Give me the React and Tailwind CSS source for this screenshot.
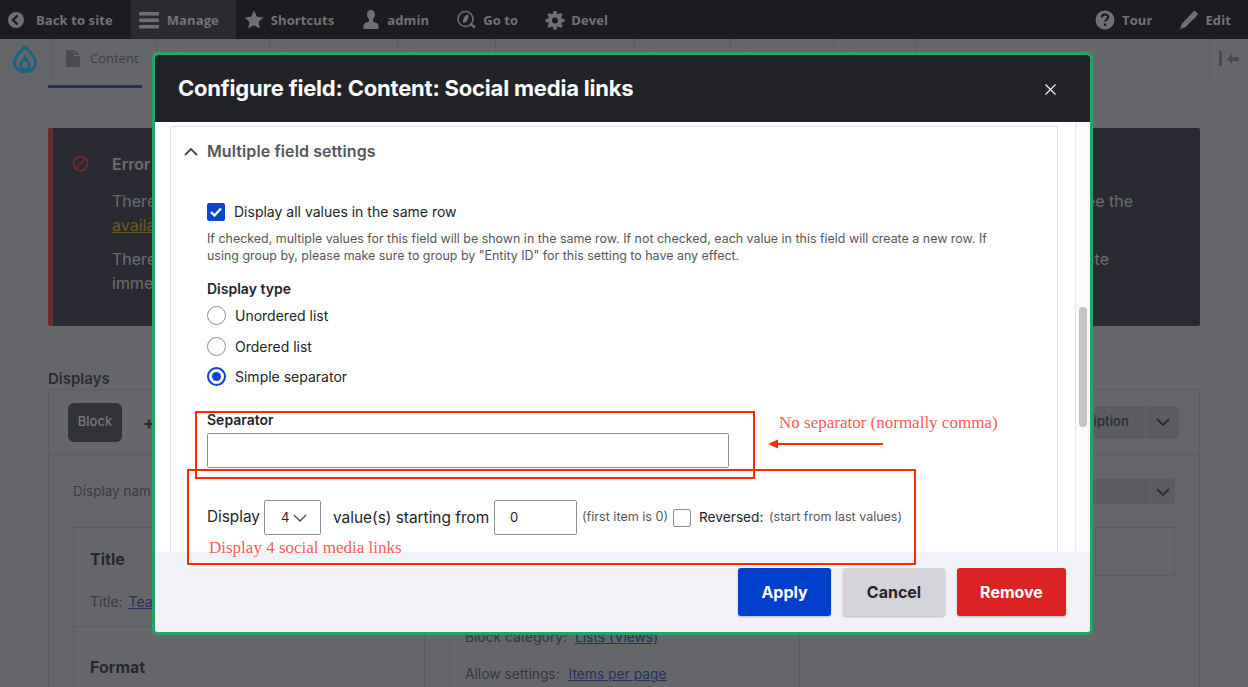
const FONT = "font-['Inter','Liberation_Sans',sans-serif]";

function BarIcon({ children }) {
  return (
    <svg width="20" height="20" viewBox="0 0 20 20" fill="#6f7074">
      {children}
    </svg>
  );
}

function ToolbarItem({ icon, label, className }) {
  return (
    <div className={`flex h-full items-center ${className}`}>
      {icon}
      <span className="translate-y-[1px] text-[13px] font-bold tracking-[0.1px] text-[#727377] font-['Open_Sans','Noto_Sans',sans-serif]">{label}</span>
    </div>
  );
}

function TopBar() {
  return (
    <div className="flex h-[39px] items-center justify-between bg-[#1c1c20]">
      <div className="flex h-full items-center">
        <ToolbarItem
          label="Back to site"
          className="ml-[6px] gap-[10px]"
          icon={
            <BarIcon>
              <circle cx="10" cy="10" r="8" />
              <path d="M11.5 5.5 7 10l4.5 4.500" fill="none" stroke="#1c1c20" strokeWidth="2.400" />
            </BarIcon>
          }
        />
        <ToolbarItem
          label="Manage"
          className="ml-[18px] w-[105px] gap-[8px] bg-[#2b2b2f] pl-[8px]"
          icon={
            <svg width="20" height="20" viewBox="0 0 20 20" fill="#6f7074">
              <rect y="2" width="20" height="3.500" rx="1" />
              <rect y="8.500" width="20" height="3.500" rx="1" />
              <rect y="15" width="20" height="3.500" rx="1" />
            </svg>
          }
        />
        <ToolbarItem
          label="Shortcuts"
          className="ml-[8px] gap-[7px]"
          icon={
            <BarIcon>
              <path d="M10 .500l2.800 6.200 6.700.8-5 4.500 1.400 6.600L10 15.300l-5.900 3.300 1.400-6.600-5-4.500 6.700-.8z" />
            </BarIcon>
          }
        />
        <ToolbarItem
          label="admin"
          className="ml-[27px] gap-[6px]"
          icon={
            <BarIcon>
              <path d="M10 0c2.600 0 4 2 4 4.500 0 2-1 3.800-2 4.800v2.200c2.500.8 5.500 1.800 5.500 4.500V19h-15v-3c0-2.700 3-3.700 5.500-4.500V9.300c-1-1-2-2.800-2-4.800C6 2 7.400 0 10 0z" />
            </BarIcon>
          }
        />
        <ToolbarItem
          label="Go to"
          className="ml-[27px] gap-[7px]"
          icon={
            <BarIcon>
              <circle cx="9.500" cy="9" r="7.500" fill="none" stroke="#6f7074" strokeWidth="1.600" />
              <path d="M15 14.500l4 3" stroke="#6f7074" strokeWidth="2.200" />
              <path d="M12.500 4.500c-3.500.5-6 3.500-5.500 8.500 3.500-.5 6-3.500 5.500-8.500z" />
            </BarIcon>
          }
        />
        <ToolbarItem
          label="Devel"
          className="ml-[27px] gap-[6px]"
          icon={
            <BarIcon>
              <path d="M8.500 1h3l.4 2.500 1.700.7 2-1.500 2.100 2.100-1.500 2 .7 1.700 2.500.4v3l-2.500.4-.7 1.700 1.500 2-2.100 2.100-2-1.500-1.700.7-.4 2.500h-3l-.4-2.500-1.700-.7-2 1.500-2.100-2.100 1.500-2-.7-1.700-2.500-.4v-3l2.500-.4.7-1.700-1.500-2 2.100-2.100 2 1.500 1.700-.7z" />
              <circle cx="10" cy="10.500" r="3" fill="#1c1c20" />
            </BarIcon>
          }
        />
      </div>
      <div className="flex h-full items-center pr-[17px]">
        <ToolbarItem
          label="Tour"
          className="gap-[7px]"
          icon={
            <BarIcon>
              <circle cx="10" cy="10" r="9.500" />
              <path d="M6.800 7.500c0-4 6.400-4 6.400-.5 0 2.500-3.200 2.500-3.200 4.500" fill="none" stroke="#1c1c20" strokeWidth="2.200" />
              <rect x="8.800" y="13.500" width="2.400" height="2.400" fill="#1c1c20" />
            </BarIcon>
          }
        />
        <ToolbarItem
          label="Edit"
          className="ml-[27px] gap-[6px]"
          icon={
            <BarIcon>
              <path d="M15.500 .500l3.500 3-.8 2L6.500 17 2.500 18.500 .800 20l.8-2.200L3 13.500 14.500 1.500z" />
            </BarIcon>
          }
        />
      </div>
    </div>
  );
}

function TrayCell({ className, children }) {
  return <div className={`flex h-full items-center border-r border-[#5c5d61] ${className}`}>{children}</div>;
}

// only the tops of these show above the dialog
function TrayIcon() {
  return (
    <svg width="10" height="16" viewBox="0 0 10 16" fill="#3f4044">
      <path d="M5 0l3 3v13H2V3z" />
    </svg>
  );
}

function Tray() {
  return (
    <div className="flex h-[39px] items-center justify-between bg-[#66676b] shadow-[0_2px_3px_rgba(0,0,0,0.25)]">
      <div className="flex h-full">
        <TrayCell className="w-[53px] pl-[13px]">
          <svg width="24" height="29" viewBox="0 0 24 29" fill="none" stroke="#1a6488" strokeWidth="3">
            <path d="M12 2c1 4 10.500 8 10.500 16.500a10.500 9.500 0 0 1-21 0C1.500 10 11 6 12 2z" />
            <path d="M12 14c1 2.500 4.500 3.500 4.500 7a4.500 4.500 0 0 1-9 0c0-3.500 3.500-4.500 4.500-7z" />
          </svg>
        </TrayCell>
        <TrayCell className="w-[104px] gap-[10px] pl-[13px]">
          <svg width="14" height="17" viewBox="0 0 14 17" fill="#4a4b4f">
            <path d="M0 0h8v6h6v11H0zM9 0l5 5H9z" />
          </svg>
          <span className="text-[13px] text-[#3f4044] font-['Open_Sans',sans-serif]">Content</span>
        </TrayCell>
        <TrayCell className="w-[113px] pl-[15px]"><TrayIcon /></TrayCell>
        <TrayCell className="w-[128px] pl-[10px]"><TrayIcon /></TrayCell>
        <TrayCell className="w-[98px] pl-[11px]"><TrayIcon /></TrayCell>
        <TrayCell className="w-[139px] pl-[11px]"><TrayIcon /></TrayCell>
        <TrayCell className="w-[96px] pl-[11px]"><TrayIcon /></TrayCell>
        <TrayCell className="w-[103px] pl-[15px]"><TrayIcon /></TrayCell>
        <TrayCell className="w-[83px] pl-[14px]"><TrayIcon /></TrayCell>
      </div>
      <div className="flex h-full w-[39px] items-center justify-center gap-[5px] border-l border-[#5c5d61]">
        <div className="h-[15px] w-[3px] bg-[#4a4b4f]" />
        <svg width="12" height="10" viewBox="0 0 12 10" fill="#4a4b4f">
          <path d="M0 5l5-5v3h7v4H5v3z" />
        </svg>
      </div>
    </div>
  );
}

function DarkChevron() {
  return (
    <svg width="14" height="8" viewBox="0 0 14 8" fill="none" stroke="#2a2b30" strokeWidth="1.800">
      <path d="M1 1l6 6 6-6" />
    </svg>
  );
}

function Backdrop() {
  return (
    <div className={`h-[609px] overflow-hidden bg-[#66676b] px-[48px] ${FONT}`}>
      <div className="h-[3px] w-[94px] translate-y-[7px] bg-[#23315f]" />
      <div className="mt-[47px] flex h-[198px] rounded-[2px] border-l-[5px] border-[#6a2c30] bg-[#2a2b32]">
        <div className="pl-[19px] pt-[27px]">
          <svg width="17" height="17" viewBox="0 0 17 17" fill="none" stroke="#6e2b2e" strokeWidth="2">
            <circle cx="8.500" cy="8.500" r="7" />
            <path d="M3.500 13.500l10-10" />
          </svg>
        </div>
        <div className="flex-1 pl-[23px] pt-[26px] text-[16px] text-[#6b6c70]">
          <p className="font-semibold leading-[20px]">Error</p>
          <p className="mt-[15px] leading-[24px]">
            There <span className="float-right mr-[67px]">see the</span>
            <br />
            <span className="text-[#6c5a20] underline">availa</span>
          </p>
          <p className="mt-[10px] leading-[24px]">
            There <span className="float-right mr-[91px]">ate</span>
            <br />
            imme
          </p>
        </div>
      </div>
      <p className="mt-[43px] text-[15px] font-semibold leading-[20px] text-[#2a2b30]">Displays</p>
      <div className="h-[400px] border border-[#5c5d61]">
        <div className="flex h-[65px] items-center justify-between border-b border-[#5c5d61] pl-[19px] pr-[20px]">
          <div className="flex items-center gap-[21px]">
            <div className="flex h-[39px] w-[54px] items-center justify-center rounded-[6px] bg-[#323338] text-[13px] font-medium text-[#77787c]">
              Block
            </div>
            <span className="text-[18px] font-bold text-[#2a2b30]">+</span>
          </div>
          <div className="flex h-[33px] items-center rounded-[4px] bg-[#5c5d61]">
            <span className="pr-[16px] text-[13px] font-semibold text-[#2f3035]">iption</span>
            <div className="flex h-full w-[34px] items-center justify-center border-l border-[#66676b]">
              <DarkChevron />
            </div>
          </div>
        </div>
        <div className="px-[24px] pt-[24px]">
          <div className="flex h-[25px] items-center justify-between">
            <span className="text-[13.5px] text-[#3a3b40]">Display nam</span>
            <div className="flex h-[25px] w-[200px] justify-end rounded-[3px] bg-[#5c5d61]">
              <div className="flex h-full w-[25px] items-center justify-center border-l border-[#66676b]">
                <DarkChevron />
              </div>
            </div>
          </div>
          <div className="mt-[23px] flex">
            <div className="h-[300px] w-[352px] shrink-0 border border-[#5c5d61]">
              <div className="h-[99px] border-b border-[#5c5d61] px-[16px] pt-[21px]">
                <p className="text-[16px] font-bold leading-[20px] text-[#26272c]">Title</p>
                <p className="mt-[23px] text-[14px] leading-[20px] text-[#3a3b40]">
                  Title: <span className="ml-[2px] text-[#23315f] underline">Tea</span>
                </p>
              </div>
              <div className="px-[16px] pt-[30px]">
                <p className="text-[16px] font-bold leading-[20px] text-[#26272c]">Format</p>
              </div>
            </div>
            <div className="ml-[24px] h-[300px] w-[351px] shrink-0 border-x border-[#5c5d61] pl-[15px] pt-[101px] text-[13.8px] text-[#36373c]">
              <p className="leading-[18px]">
                Block category: <span className="ml-[4px] text-[#23315f] underline">Lists (Views)</span>
              </p>
              <p className="mt-[18px] translate-y-[1px] leading-[18px]">
                Allow settings: <span className="ml-[5px] text-[#23315f] underline">Items per page</span>
              </p>
            </div>
            <div className="ml-auto h-[49px] w-[80px] rounded-[2px] border border-[#5c5d61]" />
          </div>
        </div>
      </div>
    </div>
  );
}

function Radio({ label, checked }) {
  return (
    <div className="flex items-center gap-[9px]">
      {checked ? (
        <span className="flex h-[19px] w-[19px] items-center justify-center rounded-full border-[2px] border-[#0a45d1]">
          <span className="h-[9px] w-[9px] rounded-full bg-[#0a45d1]" />
        </span>
      ) : (
        <span className="h-[19px] w-[19px] rounded-full border border-[#8e8f94]" />
      )}
      <span className="text-[14px] leading-[19px] text-[#232429]">{label}</span>
    </div>
  );
}

function Dialog() {
  return (
    <div className={`absolute left-[152px] top-[52px] flex h-[583px] w-[941px] flex-col overflow-hidden rounded-[6px] border-[3px] border-[#22a565] bg-white ${FONT}`}>
      <div className="flex h-[67px] shrink-0 items-center justify-between bg-[#222328] pl-[23px] pr-[34px]">
        <h1 className="text-[22px] font-bold tracking-[-0.2px] text-white">Configure field: Content: Social media links</h1>
        <svg className="mt-[2px]" width="11" height="11" viewBox="0 0 11 11" fill="none" stroke="#fff" strokeWidth="1.100">
          <path d="M.500.500l10 10M10.500.500l-10 10" />
        </svg>
      </div>

      <div className="flex h-[430px] shrink-0 overflow-hidden">
        <div className="ml-[15px] mt-[4px] h-[480px] w-[888px] shrink-0 rounded-t-[2px] border border-[#dfe0e6]">
          <div className="flex items-center gap-[8px] pl-[12px] pt-[14px]">
            <svg width="16" height="9" viewBox="0 0 16 9" fill="none" stroke="#45464c" strokeWidth="1.800">
              <path d="M2 8l6-6 6 6" />
            </svg>
            <span className="text-[16px] font-semibold leading-[20px] tracking-[0.1px] text-[#55565b]">Multiple field settings</span>
          </div>

          <div className="pl-[36px] pt-[42px]">
            <div className="flex items-center gap-[9px]">
              <span className="flex h-[18px] w-[18px] items-center justify-center rounded-[2px] bg-[#0a45d1]">
                <svg width="12" height="10" viewBox="0 0 12 10" fill="none" stroke="#fff" strokeWidth="2.400">
                  <path d="M1 5l3.500 3.500L11 1.500" />
                </svg>
              </span>
              <span className="text-[14px] leading-[18px] text-[#232429]">Display all values in the same row</span>
            </div>
            <p className="mt-[9px] w-[800px] text-[12.45px] leading-[17px] text-[#55565b]">
              If checked, multiple values for this field will be shown in the same row. If not checked, each value in this field will create a new row. If using group by, please make sure to group by "Entity ID" for this setting to have any effect.
            </p>

            <p className="mt-[16px] text-[14px] font-semibold leading-[18px] text-[#232429]">Display type</p>
            <div className="mt-[8px] flex flex-col gap-[12px]">
              <Radio label="Unordered list" />
              <Radio label="Ordered list" />
              <div className="-mt-[1px]">
                <Radio label="Simple separator" checked />
              </div>
            </div>

            <p className="mt-[25px] text-[14px] font-semibold leading-[18px] text-[#232429]">Separator</p>
            <div className="mt-[4px] h-[35px] w-[522px] rounded-[2px] border border-[#8e8f94]" />

            <div className="mt-[32px] flex h-[35px] items-center">
              <span className="w-[53px] text-[15.3px] text-[#232429]">Display</span>
              <div className="ml-[4px] flex h-[35px] w-[57px] items-center gap-[4px] rounded-[2px] border border-[#8e8f94] pl-[16px]">
                <span className="text-[13px] text-[#232429]">4</span>
                <svg width="14" height="8" viewBox="0 0 14 8" fill="none" stroke="#45464c" strokeWidth="1.300">
                  <path d="M1 1l6 6 6-6" />
                </svg>
              </div>
              <span className="ml-[12px] w-[156px] whitespace-nowrap text-[15.4px] text-[#232429]">value(s) starting from</span>
              <div className="ml-[5px] flex h-[35px] w-[83px] items-center rounded-[2px] border border-[#8e8f94] pl-[15px] text-[13px] text-[#232429]">0</div>
              <span className="ml-[5px] w-[86px] whitespace-nowrap text-[12.6px] text-[#55565b]">(first item is 0)</span>
              <span className="ml-[5px] h-[18px] w-[18px] rounded-[2px] border border-[#8e8f94]" />
              <span className="ml-[8px] w-[65px] whitespace-nowrap text-[13.7px] text-[#232429]">Reversed:</span>
              <span className="ml-[5px] whitespace-nowrap text-[12.5px] text-[#55565b]">(start from last values)</span>
            </div>
          </div>
        </div>
        <div className="ml-[17px] w-[15px] shrink-0 border-l border-[#e6e6ea] bg-[#fafafa] pl-[3px]">
          <div className="mt-[185px] h-[120px] w-[8px] rounded-full bg-[#c4c4c6]" />
        </div>
      </div>

      <div className="flex flex-1 items-start justify-end gap-[12px] bg-[#f2f3f8] pr-[24px] pt-[16px]">
        <button className="h-[48px] w-[93px] rounded-[3px] bg-[#003ecc] text-[16px] font-bold text-white shadow-[0_1px_2px_rgba(0,0,0,0.25)]">Apply</button>
        <button className="h-[48px] w-[102px] rounded-[3px] bg-[#d3d4d9] text-[16px] font-bold text-[#232429] shadow-[0_1px_2px_rgba(0,0,0,0.25)]">Cancel</button>
        <button className="h-[48px] w-[109px] rounded-[3px] bg-[#dc2323] text-[16px] font-bold text-white shadow-[0_1px_2px_rgba(0,0,0,0.25)]">Remove</button>
      </div>
    </div>
  );
}

// red markup drawn on top of the screenshot
function Annotations() {
  return (
    <>
      <div className="absolute left-[195px] top-[411px] h-[68px] w-[560px] border-[2px] border-[#ff2a00]" />
      <div className="absolute left-[187px] top-[469px] h-[96px] w-[729px] border-[2px] border-[#ff2a00]" />
      <span className="absolute left-[779px] top-[412px] text-[17px] leading-[22px] text-[#ff5a5a] font-['Liberation_Serif',serif]">No separator (normally comma)</span>
      <span className="absolute left-[209px] top-[537px] text-[17px] leading-[22px] text-[#ff5a5a] font-['Liberation_Serif',serif]">Display 4 social media links</span>
      <svg className="absolute left-[768px] top-[437px]" width="115" height="14" viewBox="0 0 115 14">
        <path d="M10 7h105" stroke="#ff2a00" strokeWidth="2" />
        <path d="M0 7l10-4.500v9z" fill="#ff2a00" />
      </svg>
    </>
  );
}

export default function App() {
  return (
    <div className="relative h-[687px] w-[1248px] overflow-hidden">
      <TopBar />
      <Tray />
      <Backdrop />
      <Dialog />
      <Annotations />
    </div>
  );
}
